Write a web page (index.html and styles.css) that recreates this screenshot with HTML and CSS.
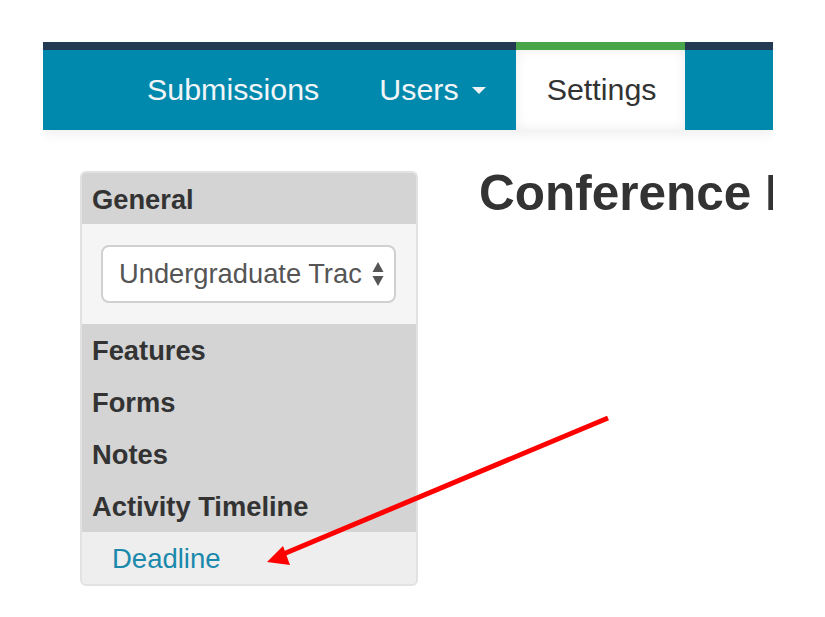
FILE: index.html
```html
<!DOCTYPE html>
<html>
<head>
<meta charset="utf-8">
<link rel="stylesheet" href="styles.css">
</head>
<body>
<div class="page">
  <nav class="nav">
    <a class="nav-item">Submissions</a>
    <a class="nav-item">Users <span class="caret"></span></a>
    <a class="nav-item active">Settings</a>
  </nav>
  <div class="main">
    <aside class="sidebar">
      <div class="sec-head">General</div>
      <div class="sec-body">
        <div class="select">
          <span class="select-value">Undergraduate Track</span>
          <svg class="select-arrows" width="12" height="26" viewBox="0 0 12 26">
            <path d="M6 1 L11.5 11 L0.5 11 Z" fill="#555"/>
            <path d="M6 25 L11.5 15 L0.5 15 Z" fill="#555"/>
          </svg>
        </div>
      </div>
      <div class="sec-head">Features</div>
      <div class="sec-head">Forms</div>
      <div class="sec-head">Notes</div>
      <div class="sec-head">Activity Timeline</div>
      <div class="sub-item"><a class="link">Deadline</a></div>
    </aside>
    <section class="content">
      <h1 class="title">Conference Information</h1>
    </section>
  </div>
  <svg class="annot" width="730" height="575" viewBox="0 0 730 575">
    <line x1="565" y1="376" x2="238" y2="513" stroke="#ff0000" stroke-width="5"/>
    <path d="M224 520 L240 504 L247 523 Z" fill="#ff0000"/>
  </svg>
</div>
</body>
</html>
```
FILE: styles.css
```css
* { box-sizing: border-box; }
html, body { margin: 0; padding: 0; background: #fff; }
body { font-family: "Liberation Sans", Arial, Helvetica, sans-serif; color: #333; }

.page {
  position: relative;
  margin: 42px 0 0 43px;
  width: 730px;
  height: 575px;
  overflow: hidden;
}

.nav {
  display: flex;
  height: 88px;
  background: #0089ad;
  border-top: 8px solid #243a53;
  padding-left: 74px;
  box-shadow: 0 4px 12px rgba(0, 0, 0, 0.07);
  position: relative;
  z-index: 1;
}
.nav-item {
  display: flex;
  align-items: center;
  padding: 0 30px 1px;
  font-size: 30.4px;
  color: #f2f5f7;
  white-space: nowrap;
}
.caret {
  display: inline-block;
  width: 0;
  height: 0;
  margin-left: 13px;
  margin-top: 2px;
  border-left: 7px solid transparent;
  border-right: 7px solid transparent;
  border-top: 7px solid #eef2f4;
}
.nav-item.active {
  margin-top: -8px;
  border-top: 8px solid #48a54a;
  background: #fff;
  color: #333;
  padding: 0 29px 1px 31px;
  box-shadow: inset 0 0 12px rgba(0, 0, 0, 0.08);
  height: 88px;
}

.main {
  display: flex;
  padding: 41px 0 0 37px;
}

.sidebar {
  width: 338px;
  flex: none;
  border: 2px solid #e2e2e2;
  border-radius: 6px;
  overflow: hidden;
  background: #eee;
}
.sec-head {
  height: 52px;
  display: flex;
  align-items: center;
  padding: 2px 10px 0;
  background: #d4d4d4;
  font-weight: bold;
  font-size: 27.3px;
  color: #333;
}
.sidebar > .sec-head:first-child { height: 51px; }
.sec-body {
  background: #f5f5f5;
  padding: 21px 20px 21px 19px;
}
.select {
  display: flex;
  align-items: center;
  height: 58px;
  background: #fff;
  border: 2px solid #d0d0d0;
  border-radius: 8px;
  padding: 0 10px 0 16px;
}
.select-value {
  flex: 1;
  overflow: hidden;
  white-space: nowrap;
  font-size: 27.3px;
  color: #555;
  margin-right: 9px;
}
.select-arrows { flex: none; }

.sub-item {
  height: 52px;
  display: flex;
  align-items: center;
  padding: 2px 0 0 30px;
  background: #eee;
}
.link {
  font-size: 27.5px;
  color: #1a89ab;
}

.content {
  flex: 1;
  padding-left: 61px;
  min-width: 0;
}
.title {
  margin: -6px 0 0;
  font-size: 49.5px;
  line-height: 56px;
  font-weight: bold;
  word-spacing: 0;
  white-space: nowrap;
  color: #333;
}

.annot {
  position: absolute;
  left: 0;
  top: 0;
  pointer-events: none;
}
```
